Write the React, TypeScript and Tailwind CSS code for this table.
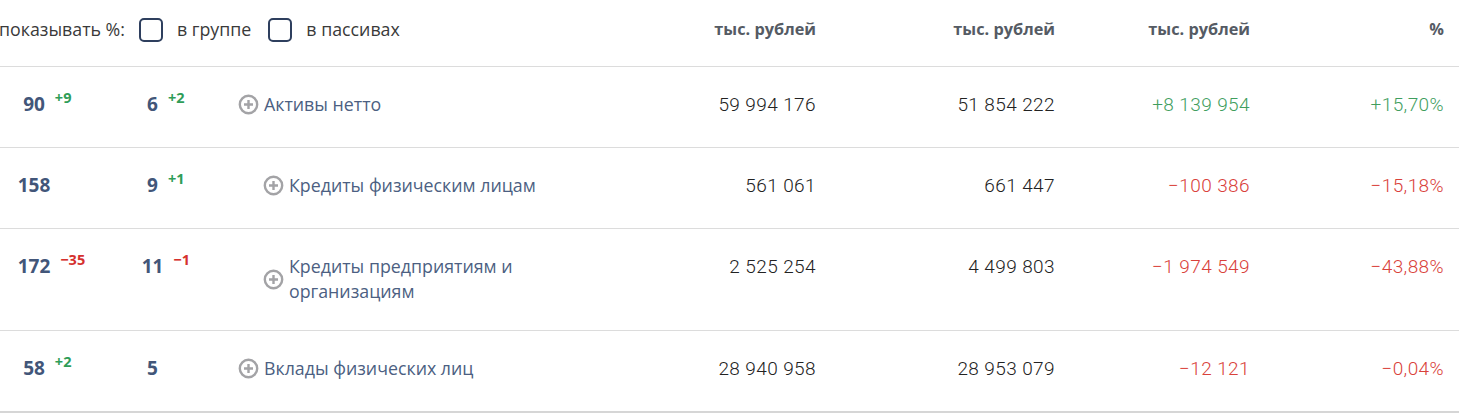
import React from "react";

const PlusIcon = () => (
  <svg width="21" height="21" viewBox="0 0 21 21" className="shrink-0">
    <circle cx="10.5" cy="10.5" r="8.7" fill="none" stroke="#a3a3a6" strokeWidth="2.4" />
    <path d="M10.5 6v9M6 10.5h9" stroke="#a3a3a6" strokeWidth="2.4" />
  </svg>
);

type Row = {
  a: string;
  aBadge?: { t: string; pos: boolean };
  b: string;
  bBadge?: { t: string; pos: boolean };
  name: string;
  indent: boolean;
  v1: string;
  v2: string;
  v3: string;
  v4: string;
  pos: boolean;
  tall?: boolean;
};

const rows: Row[] = [
  { a: "90", aBadge: { t: "+9", pos: true }, b: "6", bBadge: { t: "+2", pos: true }, name: "Активы нетто", indent: false, v1: "59 994 176", v2: "51 854 222", v3: "+8 139 954", v4: "+15,70%", pos: true },
  { a: "158", b: "9", bBadge: { t: "+1", pos: true }, name: "Кредиты физическим лицам", indent: true, v1: "561 061", v2: "661 447", v3: "−100 386", v4: "−15,18%", pos: false },
  { a: "172", aBadge: { t: "−35", pos: false }, b: "11", bBadge: { t: "−1", pos: false }, name: "Кредиты предприятиям и организациям", indent: true, v1: "2 525 254", v2: "4 499 803", v3: "−1 974 549", v4: "−43,88%", pos: false, tall: true },
  { a: "58", aBadge: { t: "+2", pos: true }, b: "5", name: "Вклады физических лиц", indent: false, v1: "28 940 958", v2: "28 953 079", v3: "−12 121", v4: "−0,04%", pos: false },
];

const Count = ({ v, badge }: { v: string; badge?: { t: string; pos: boolean } }) => (
  <span className="relative inline-block">
    <span className="text-[19px] font-bold text-[#425679]">{v}</span>
    {badge && (
      <span
        className={`absolute left-full top-[-7px] ml-[10px] whitespace-nowrap text-[14.5px] font-bold ${
          badge.pos ? "text-[#2f9d58]" : "text-[#d5312e]"
        }`}
      >
        {badge.t}
      </span>
    )}
  </span>
);

const Checkbox = () => (
  <span className="inline-block h-[24px] w-[24px] rounded-[5px] border-2 border-[#2e3f5e] bg-white align-middle" />
);

export default function App() {
  const num = "text-right text-[19px] font-light text-[#222] [font-family:Roboto,sans-serif] tracking-[0.4px]";
  const head = "text-right text-[16.3px] font-bold text-[#555b64]";
  return (
    <div className="w-[1459px] bg-white [font-family:'Open_Sans',sans-serif] leading-[25px]">
      <div className="flex h-[67px] items-center border-b border-[#dcdcdc] pb-[7px] pr-[15px]">
        <div className="ml-[-1px] flex items-center text-[17.8px] text-[#3a3a3a]">
          <span>показывать %:</span>
          <span className="ml-[14px] flex"><Checkbox /></span>
          <span className="ml-[14px]">в группе</span>
          <span className="ml-[17px] flex"><Checkbox /></span>
          <span className="ml-[14px]">в пассивах</span>
        </div>
        <div className="flex-1" />
        <div className={`w-[216px] ${head}`}>тыс. рублей</div>
        <div className={`w-[239px] ${head}`}>тыс. рублей</div>
        <div className={`w-[195px] ${head}`}>тыс. рублей</div>
        <div className={`w-[194px] ${head}`}>%</div>
      </div>
      {rows.map((r, i) => (
        <div
          key={i}
          className={`flex items-start pr-[15px] pt-[25px] ${r.tall ? "pb-[26px]" : "pb-[29px]"} ${
            i === rows.length - 1 ? "border-b-2 border-[#d6d6d6]" : "border-b border-[#dcdcdc]"
          }`}
        >
          <div className="w-[68px] text-center">
            <Count v={r.a} badge={r.aBadge} />
          </div>
          <div className="ml-[52px] w-[65px] text-center">
            <Count v={r.b} badge={r.bBadge} />
          </div>
          <div className={`flex flex-1 items-center ${r.indent ? "ml-[78px]" : "ml-[53px]"}`}>
            <PlusIcon />
            <span className="ml-[5px] w-[260px] text-[17.8px] text-[#4c5f82]">{r.name}</span>
          </div>
          <div className={`w-[216px] ${num}`}>{r.v1}</div>
          <div className={`w-[239px] ${num}`}>{r.v2}</div>
          <div className={`w-[195px] ${num} ${r.pos ? "!text-[#3f9e5e]" : "!text-[#d9413a]"}`}>{r.v3}</div>
          <div className={`w-[194px] ${num} ${r.pos ? "!text-[#3f9e5e]" : "!text-[#d9413a]"}`}>{r.v4}</div>
        </div>
      ))}
    </div>
  );
}
